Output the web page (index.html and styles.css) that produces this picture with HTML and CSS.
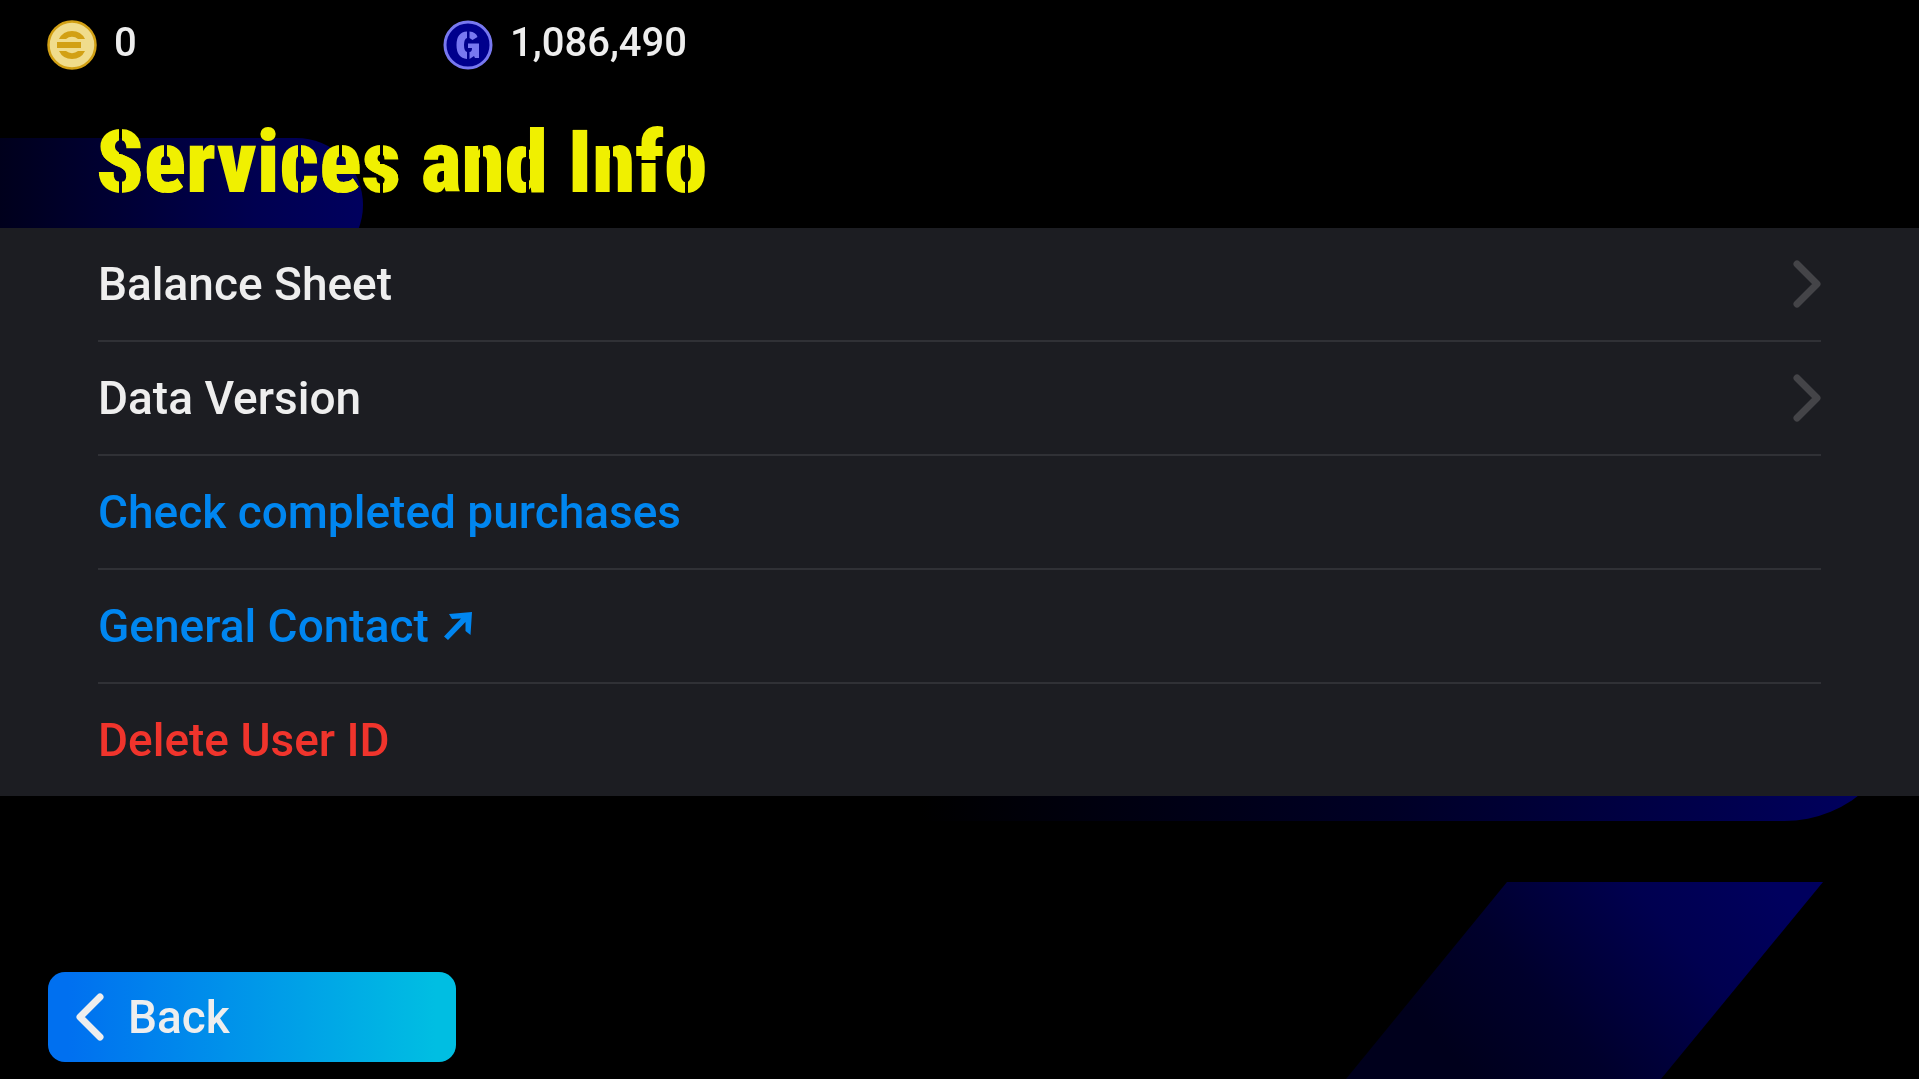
FILE: index.html
```html
<!DOCTYPE html>
<html lang="en">
<head>
<meta charset="utf-8">
<meta name="viewport" content="width=device-width, initial-scale=1">
<title>Services and Info</title>
<link rel="stylesheet" href="styles.css">
</head>
<body>
<svg class="backdrop" viewBox="0 0 1919 1079" preserveAspectRatio="xMidYMid slice" aria-hidden="true">
  <defs>
    <linearGradient id="pill" x1="0" x2="1" y1="0" y2="0"><stop offset="0" stop-color="#00001c"/><stop offset="0.7" stop-color="#000050"/><stop offset="1" stop-color="#00005e"/></linearGradient>
    <linearGradient id="bar" x1="920" x2="1860" y1="0" y2="0" gradientUnits="userSpaceOnUse"><stop offset="0" stop-color="#000000"/><stop offset="0.5" stop-color="#000026"/><stop offset="1" stop-color="#00005e"/></linearGradient>
    <linearGradient id="slant" x1="1760" y1="870" x2="1490" y2="1100" gradientUnits="userSpaceOnUse"><stop offset="0" stop-color="#00005e"/><stop offset="0.3" stop-color="#000050"/><stop offset="0.7" stop-color="#00002c"/><stop offset="1" stop-color="#00001c"/></linearGradient>
  </defs>
  <path d="M0 138H296A67 67 0 0 1 363 205A67 67 0 0 1 296 272H0Z" fill="url(#pill)"/>
  <path d="M920 699H1906A122 122 0 0 1 1784 821H920Z" fill="url(#bar)"/>
  <path d="M1507 882H1823L1661 1079H1346Z" fill="url(#slant)"/>
</svg>
<div class="screen">
  <header class="wallet">
    <div class="balance">
      <svg class="coin" viewBox="0 0 50 50" aria-hidden="true">
        <circle cx="25" cy="25" r="23.5" fill="#f0dc8c" stroke="#d2a014" stroke-width="2.5"/>
        <path d="M12 19A14.500 14.500 0 0 1 38 19H31A9.500 9.500 0 0 0 19 19ZM12 31A14.500 14.500 0 0 0 38 31H31A9.500 9.500 0 0 1 19 31ZM10 22H34V28H10Z" fill="#d2a014"/>
      </svg>
      <span>0</span>
    </div>
    <div class="balance">
      <svg class="coin" viewBox="0 0 50 50" aria-hidden="true">
        <circle cx="25" cy="25" r="23" fill="#00008c" stroke="#7878f0" stroke-width="3"/>
        <path d="M24 11.500V18Q21 19 21 25T24 32V39Q13.500 38 13.500 25T24 11.500ZM26.500 11.500Q33 12 34.500 17L29.500 20L26.500 18ZM25 23.500H36V38H32L31 36L26.500 39V32Q29 32 29 28H25Z" fill="#7878f0"/>
      </svg>
      <span>1,086,490</span>
    </div>
  </header>
  <h1 class="title"><span class="cut cut-upper">S</span><span class="cut cut-top">e</span>rvi<span class="cut">c</span><span class="cut cut-top">e</span><span class="cut cut-lower">s</span> a<span class="cut cut-stem">n</span><span class="cut cut-back">d</span> I<span class="cut cut-stem">n</span><span class="cut cut-bar">f</span><span class="cut">o</span></h1>
  <main>
    <ul class="menu">
      <li><button class="item" type="button">Balance Sheet<svg class="chevron" viewBox="0 0 28 50" aria-hidden="true"><path d="M4 5L24 25L4 45"/></svg></button></li>
      <li><button class="item" type="button">Data Version<svg class="chevron" viewBox="0 0 28 50" aria-hidden="true"><path d="M4 5L24 25L4 45"/></svg></button></li>
      <li><a class="item link" href="#purchases">Check completed purchases</a></li>
      <li><a class="item link" href="#contact">General Contact<svg class="external" viewBox="0 0 28 28" aria-hidden="true"><path d="M5 2L28 0L26.500 23L21.500 19L21.500 10L4 28L0 24.500L17 6.500L8 7Z" fill="currentColor"/></svg></a></li>
      <li><button class="item danger" type="button">Delete User ID</button></li>
    </ul>
  </main>
  <footer class="footer">
    <button class="back" type="button"><svg class="chevron" viewBox="0 0 28 50" aria-hidden="true"><path d="M24 5L4 25L24 45"/></svg>Back</button>
  </footer>
</div>
</body>
</html>
```
FILE: styles.css
```css
* { box-sizing: border-box; }

body {
  margin: 0;
  background: #000;
  color: #eee;
  font-family: Roboto, "Liberation Sans", sans-serif;
  font-weight: 500;
}

.backdrop {
  position: fixed;
  inset: 0;
  width: 100%;
  height: 100%;
  z-index: -1;
}

.screen {
  display: flex;
  flex-direction: column;
  min-height: 100vh;
}

.wallet {
  display: flex;
  padding: 18px 47px 0;
}

.balance {
  display: flex;
  align-items: center;
  gap: 17px;
  width: 396px;
  height: 54px;
  font-size: 40px;
  line-height: 48px;
}

.balance span { padding-bottom: 4px; }

.coin {
  width: 50px;
  height: 50px;
}

.title {
  margin: 0;
  padding: 40px 96px 16px;
  color: #f0f000;
  font-family: "Roboto Condensed", Roboto, sans-serif;
  font-size: 87px;
  font-weight: 900;
  line-height: 100px;
}

/* Stencil letters: a thin slit through the glyph, with a solid band where the stroke stays whole */
.cut {
  --slit: 48%;
  --solid-from: 100%;
  --solid-to: 100%;
  color: transparent;
  background-image:
    linear-gradient(transparent var(--solid-from), #f0f000 var(--solid-from), #f0f000 var(--solid-to), transparent var(--solid-to)),
    linear-gradient(90deg, #f0f000 var(--slit), transparent var(--slit), transparent calc(var(--slit) + 3px), #f0f000 calc(var(--slit) + 3px));
  background-clip: text;
  -webkit-background-clip: text;
}

.cut-upper { --solid-from: 42%; --solid-to: 64%; }
.cut-lower { --solid-from: 52%; --solid-to: 70%; }
.cut-top { --solid-from: 52%; }
.cut-stem { --slit: 43%; --solid-to: 100%; }
.cut-back { --slit: 50%; }

.cut-bar {
  background-image: linear-gradient(#f0f000 48%, transparent 48%, transparent 51%, #f0f000 51%);
}

.menu {
  margin: 0;
  padding: 0 98px;
  list-style: none;
  background: #1c1d22;
}

.menu li + li { border-top: 2px solid #303136; }

.item {
  display: flex;
  align-items: center;
  width: 100%;
  height: 112px;
  padding: 0;
  border: 0;
  background: none;
  color: inherit;
  font: inherit;
  font-size: 46px;
  line-height: 56px;
  text-decoration: none;
}

.link { color: #0086f0; }
.danger { color: #f0342c; }

.chevron {
  width: 28px;
  height: 50px;
  fill: none;
  stroke: currentColor;
  stroke-width: 7;
  stroke-linecap: round;
  stroke-linejoin: round;
}

.item .chevron {
  margin-left: auto;
  color: #444448;
}

.external {
  width: 28px;
  height: 28px;
  margin-left: 15px;
}

.footer {
  margin-top: auto;
  padding: 16px 48px 17px;
}

.back {
  display: flex;
  align-items: center;
  gap: 24px;
  width: 408px;
  height: 90px;
  padding: 0 28px;
  border: 0;
  border-radius: 17px;
  background: linear-gradient(90deg, #0070f0 5%, #00bee2 95%);
  color: #eee;
  font: inherit;
  font-size: 46px;
}
```
